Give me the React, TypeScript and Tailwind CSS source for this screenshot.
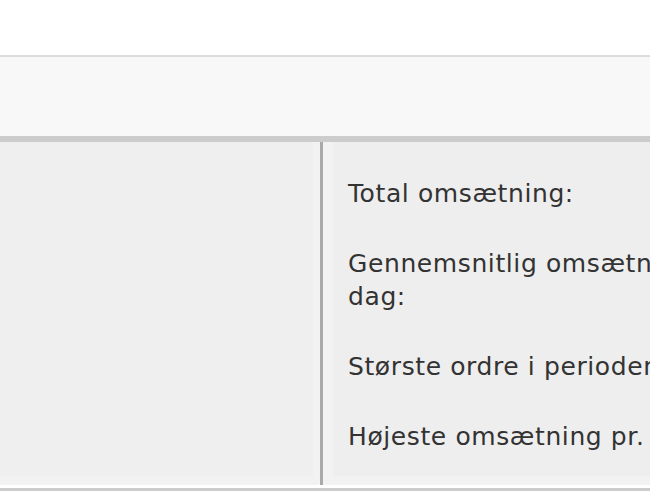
const rows: string[][] = [
  ["Total omsætning:"],
  ["Gennemsnitlig omsætning pr.", "dag:"],
  ["Største ordre i perioden:"],
  ["Højeste omsætning pr. dag:"],
];

export default function App() {
  return (
    <div
      className="h-[500px] w-[650px] overflow-hidden bg-white"
      style={{ fontFamily: '"DejaVu Sans", Verdana, sans-serif' }}
    >
      <div className="h-[55px]" />
      <div className="h-[87px] border-t-2 border-b-[6px] border-t-[#dcdcdc] border-b-[#cccccc] bg-[#f8f8f8]" />
      <div className="flex h-[343px]">
        <div className="w-[320px] shrink-0 rounded-br-[3px] border-r-[7px] border-b-[9px] border-[#f2f2f2] bg-[#efefef]" />
        <div className="w-[3px] shrink-0 bg-[#a9a9a9]" />
        <div className="min-w-0 flex-1 overflow-hidden rounded-bl-[3px] border-l-[10px] border-b-[9px] border-[#f2f2f2] bg-[#eeeeee] pl-[15px] pt-[35px]">
          {rows.map((r, i) => (
            <div key={i} className="mb-[37px] whitespace-nowrap text-[25px] leading-[33px] tracking-[0.6px] text-[#333333]">
              {r.map((line, j) => (
                <div key={j}>{line}</div>
              ))}
            </div>
          ))}
        </div>
      </div>
      <div className="h-[3px] bg-white" />
      <div className="h-[3px] bg-[#cccccc]" />
    </div>
  );
}
